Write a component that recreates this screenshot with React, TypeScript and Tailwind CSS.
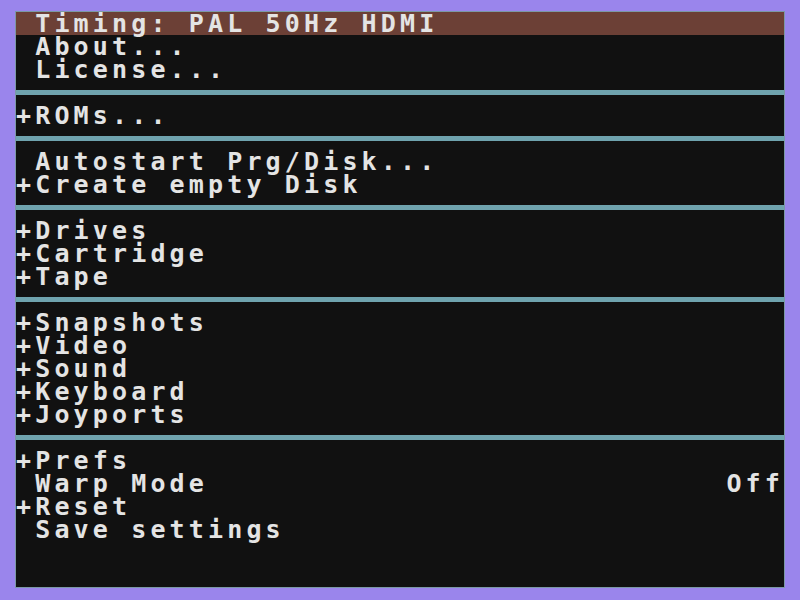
import React from "react";

type Row =
  | { kind: "text"; text: string; right?: string; highlight?: boolean }
  | { kind: "sep" }
  | { kind: "blank" };

const rows: Row[] = [
  { kind: "text", text: " Timing: PAL 50Hz HDMI", highlight: true },
  { kind: "text", text: " About..." },
  { kind: "text", text: " License..." },
  { kind: "sep" },
  { kind: "text", text: "+ROMs..." },
  { kind: "sep" },
  { kind: "text", text: " Autostart Prg/Disk..." },
  { kind: "text", text: "+Create empty Disk" },
  { kind: "sep" },
  { kind: "text", text: "+Drives" },
  { kind: "text", text: "+Cartridge" },
  { kind: "text", text: "+Tape" },
  { kind: "sep" },
  { kind: "text", text: "+Snapshots" },
  { kind: "text", text: "+Video" },
  { kind: "text", text: "+Sound" },
  { kind: "text", text: "+Keyboard" },
  { kind: "text", text: "+Joyports" },
  { kind: "sep" },
  { kind: "text", text: "+Prefs" },
  { kind: "text", text: " Warp Mode", right: "Off" },
  { kind: "text", text: "+Reset" },
  { kind: "text", text: " Save settings" },
  { kind: "blank" },
  { kind: "blank" },
];

export default function App() {
  return (
    <div className="w-[800px] h-[600px] bg-[#9a85ec] pt-[11px] pl-[15px]">
      <div className="w-[770px] h-[577px] border border-[#7c98a6] bg-[#111111] flex flex-col overflow-hidden">
        {rows.map((r, i) => {
          if (r.kind === "sep") {
            return (
              <div key={i} className="h-[23px] flex items-center">
                <div className="h-[5px] w-full bg-[#6fa3ae]" />
              </div>
            );
          }
          if (r.kind === "blank") {
            return <div key={i} className="h-[23px]" />;
          }
          return (
            <div
              key={i}
              className={`h-[23px] flex items-center justify-between whitespace-pre font-bold text-[25px] leading-[23px] tracking-[4.15px] text-[#e4e4e4] ${
                r.highlight ? "bg-[#6c4036]" : ""
              }`}
              style={{ fontFamily: '"DejaVu Sans Mono", "Liberation Mono", monospace' }}
            >
              <span>{r.text}</span>
              {r.right ? <span>{r.right}</span> : null}
            </div>
          );
        })}
      </div>
    </div>
  );
}
